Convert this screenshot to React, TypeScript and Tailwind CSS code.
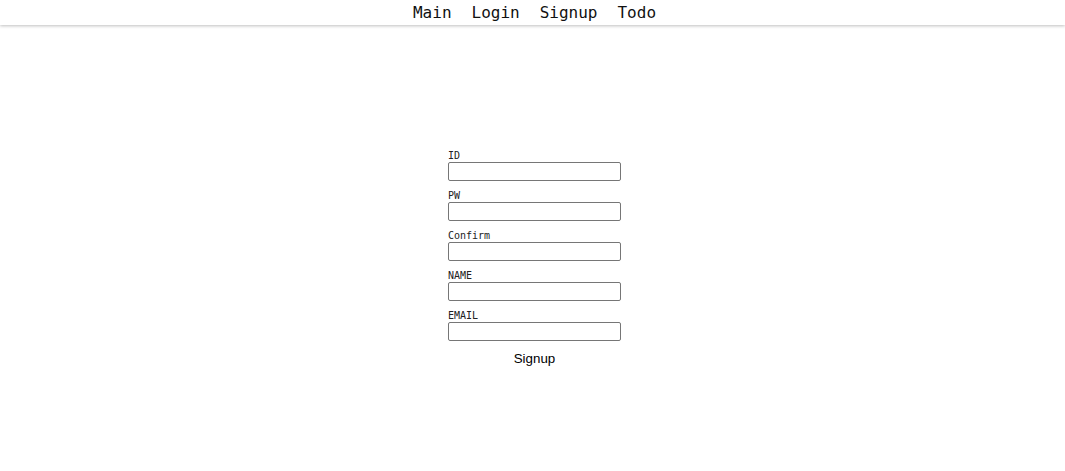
const fields = ['ID', 'PW', 'Confirm', 'NAME', 'EMAIL']

export default function App() {
    return (
        <div className="min-h-[471px] bg-white">
            <nav className="h-[25px] flex items-center justify-center gap-5 pl-[4px] shadow-[0_1px_3px_rgba(0,0,0,0.25)] font-['DejaVu_Sans_Mono',monospace] text-[16px] text-[#111]">
                <a>Main</a>
                <a>Login</a>
                <a>Signup</a>
                <a>Todo</a>
            </nav>
            <div className="flex justify-center pt-[125px] pl-[4px]">
                <form className="flex flex-col w-[173px]">
                    {fields.map((f) => (
                        <div key={f} className="flex flex-col mb-[9px]">
                            <label className="font-['DejaVu_Sans_Mono',monospace] text-[10px] leading-[12px] text-[#222]">{f}</label>
                            <input
                                type={f === 'PW' || f === 'Confirm' ? 'password' : 'text'}
                                className="h-[19px] w-[173px] border border-[#767676] rounded-[2px] bg-white"
                            />
                        </div>
                    ))}
                    <button type="button" className="self-center px-[6px] py-[1px] font-['Liberation_Sans',Arial,sans-serif] text-[13.33px] leading-[16px] text-black">
                        Signup
                    </button>
                </form>
            </div>
        </div>
    )
}
